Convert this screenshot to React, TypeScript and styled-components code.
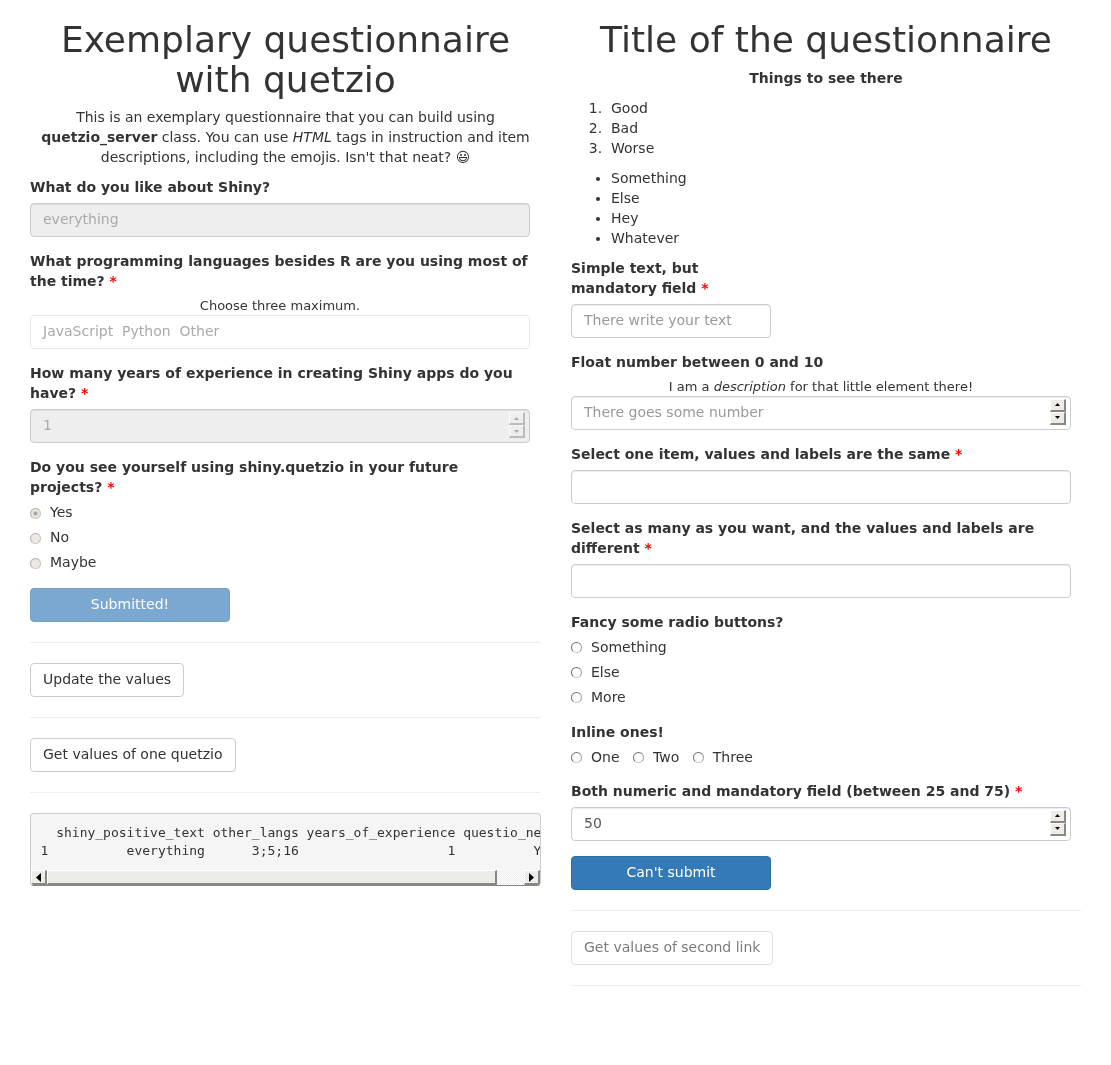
import React from "react";
import styled, { createGlobalStyle } from "styled-components";

const Global = createGlobalStyle`
  html, body { margin: 0; padding: 0; background: #fff; }
  body {
    font-family: "DejaVu Sans", sans-serif;
    font-size: 14px;
    line-height: 20px;
    color: #333;
  }
  * { box-sizing: border-box; }
`;

const Page = styled.div`
  display: grid;
  grid-template-columns: 511px 510px;
  column-gap: 30px;
  padding: 0 30px;
  align-items: start;
  height: 1065px;
  overflow: hidden;
  will-change: transform;
`;
const Column = styled.div`
  min-width: 0;
  display: flex;
  flex-direction: column;
`;
const Title = styled.h1`
  margin: 20px 0 8px;
  font-size: 36px;
  line-height: 39.6px;
  font-weight: 500;
  text-align: center;
  color: #333;
`;
const Intro = styled.p`
  margin: 0 0 10px;
  text-align: center;
`;
const OList = styled.ol`
  margin: 0 0 10px;
  padding-left: 40px;
  li::marker { content: counter(list-item) ".  "; }
`;
const UList = styled.ul`
  margin: 0 0 10px;
  padding-left: 40px;
`;
const Group = styled.div<{ $w?: number; $mb?: number }>`
  width: ${(p) => p.$w ?? 500}px;
  margin-bottom: ${(p) => p.$mb ?? 14}px;
`;
const Label = styled.label`
  display: block;
  font-weight: 700;
  margin-bottom: 6px;
`;
const Req = styled.span`
  color: red;
`;
const Desc = styled.div`
  font-size: 13px;
  line-height: 18px;
  text-align: center;
`;
const Field = styled.div<{ $disabled?: boolean; $ph?: boolean }>`
  position: relative;
  height: 34px;
  padding: 5px 12px 7px;
  border: 1px solid #ccc;
  border-radius: 4px;
  background: ${(p) => (p.$disabled ? "#eee" : "#fff")};
  box-shadow: inset 0 1px 1px rgba(0, 0, 0, 0.075);
  color: ${(p) => (p.$disabled ? "#aaa" : p.$ph ? "#999" : "#555")};
  line-height: 20px;
  white-space: pre;
`;
const SelectBox = styled.div`
  height: 34px;
  padding: 5px 12px 7px;
  border: 1px solid #e6e6e6;
  border-radius: 4px;
  background: #fff;
  color: #aaa;
  white-space: pre;
`;
const Spin = styled.div`
  position: absolute;
  right: 4px;
  top: 2px;
  width: 16px;
  display: flex;
  flex-direction: column;
`;
const SpinBtn = styled.div<{ $disabled?: boolean }>`
  width: 16px;
  height: 13px;
  display: flex;
  align-items: center;
  justify-content: center;
  background: ${(p) => (p.$disabled ? "#eee" : "#efebe7")};
  border-top: 1px solid ${(p) => (p.$disabled ? "#fafafa" : "#fff")};
  border-left: 1px solid ${(p) => (p.$disabled ? "#fafafa" : "#fff")};
  border-right: 2px solid ${(p) => (p.$disabled ? "#bbb" : "#8a8780")};
  border-bottom: 2px solid ${(p) => (p.$disabled ? "#bbb" : "#8a8780")};
  svg { display: block; }
`;
const RadioList = styled.div`
  display: flex;
  flex-direction: column;
  gap: 5px;
  margin-top: -1px;
`;
const RadioInlineList = styled.div`
  display: flex;
  gap: 13.5px;
  margin-top: -1px;
`;
const RadioRow = styled.div`
  display: flex;
  align-items: center;
  height: 20px;
`;
const Circle = styled.span<{ $disabled?: boolean; $on?: boolean }>`
  width: 11px;
  height: 11px;
  margin-top: 2px;
  margin-right: 9px;
  border-radius: 50%;
  flex: none;
  background: ${(p) =>
    p.$disabled
      ? p.$on
        ? "radial-gradient(circle, #a9a6a0 0 1.5px, #e8e5e0 2.5px)"
        : "#ece9e4"
      : "#fff"};
  border: 1.5px solid;
  border-color: ${(p) =>
    p.$disabled ? "#b0aca5 #c4c0b9 #cfccc5 #b4b0a9" : "#6e6e6e #a0a0a0 #c8c8c8 #707070"};
`;
const Btn = styled.div<{ $primary?: boolean; $disabled?: boolean; $w?: number }>`
  display: inline-block;
  width: ${(p) => (p.$w ? `${p.$w}px` : "fit-content")};
  height: 34px;
  padding: 5px 12px 7px;
  text-align: center;
  white-space: nowrap;
  border-radius: 4px;
  border: 1px solid ${(p) => (p.$primary ? "#2e6da4" : "#ccc")};
  background: ${(p) => (p.$primary ? "#337ab7" : "#fff")};
  color: ${(p) => (p.$primary ? "#fff" : "#333")};
  opacity: ${(p) => (p.$disabled ? 0.65 : 1)};
`;
const Rule = styled.hr`
  width: 100%;
  margin: 20px 0;
  border: 0;
  border-top: 1px solid #eee;
  height: 0;
`;
const PreBox = styled.div`
  border: 1px solid #ccc;
  border-bottom-color: #8a8780;
  border-radius: 4px;
  background: #f5f5f5;
  overflow: hidden;
`;
const Pre = styled.pre`
  margin: 0;
  padding: 9.5px 0 9.5px 9.5px;
  font-family: "DejaVu Sans Mono", monospace;
  font-size: 13px;
  line-height: 18.57px;
  color: #333;
  overflow: hidden;
`;
const ScrollBar = styled.div`
  height: 15px;
  display: flex;
  background: repeating-conic-gradient(#efebe7 0 25%, #fff 0 50%) 0 0 / 2px 2px;
`;
const ScrollBtn = styled.div`
  width: 16px;
  flex: none;
  display: flex;
  align-items: center;
  justify-content: center;
  background: #efebe7;
  border-top: 1px solid #fff;
  border-left: 1px solid #fff;
  border-right: 2px solid #8a8780;
  border-bottom: 2px solid #8a8780;
`;
const Thumb = styled.div`
  width: 450px;
  flex: none;
  background: #efebe7;
  border-top: 1px solid #fff;
  border-left: 1px solid #fff;
  border-right: 2px solid #8a8780;
  border-bottom: 2px solid #8a8780;
`;
const Spacer = styled.div`
  flex: 1;
`;

const Up = ({ c = "#000", s = 5 }: { c?: string; s?: number }) => (
  <svg width={s} height={3} viewBox="0 0 5 3"><path d="M2.5 0 5 3H0z" fill={c} /></svg>
);
const Down = ({ c = "#000", s = 5 }: { c?: string; s?: number }) => (
  <svg width={s} height={3} viewBox="0 0 5 3"><path d="M0 0h5L2.5 3z" fill={c} /></svg>
);
const LeftArrow = () => (
  <svg width={5} height={9} viewBox="0 0 5 9"><path d="M5 0v9L0 4.5z" fill="#000" /></svg>
);
const RightArrow = () => (
  <svg width={5} height={9} viewBox="0 0 5 9"><path d="M0 0v9l5-4.5z" fill="#000" /></svg>
);

const Spinner = ({ disabled }: { disabled?: boolean }) => (
  <Spin>
    <SpinBtn $disabled={disabled}><Up c={disabled ? "#aaa" : "#000"} /></SpinBtn>
    <SpinBtn $disabled={disabled}><Down c={disabled ? "#aaa" : "#000"} /></SpinBtn>
  </Spin>
);

const Radio = ({ label, disabled, on }: { label: string; disabled?: boolean; on?: boolean }) => (
  <RadioRow>
    <Circle $disabled={disabled} $on={on} />
    {label}
  </RadioRow>
);

const preText = `  shiny_positive_text other_langs years_of_experience questio_next_one
1          everything      3;5;16                   1          Y`;

export default function App() {
  return (
    <>
      <Global />
      <Page>
        <Column>
          <Title>Exemplary questionnaire with quetzio</Title>
          <Intro>
            This is an exemplary questionnaire that you can build using <b>quetzio_server</b> class. You can use <i>HTML</i> tags in instruction and item descriptions, including the emojis. Isn't that neat? 😃
          </Intro>
          <Group>
            <Label>What do you like about Shiny?</Label>
            <Field $disabled>everything</Field>
          </Group>
          <Group>
            <Label>What programming languages besides R are you using most of the time? <Req>*</Req></Label>
            <Desc>Choose three maximum.</Desc>
            <SelectBox>JavaScript  Python  Other</SelectBox>
          </Group>
          <Group>
            <Label>How many years of experience in creating Shiny apps do you have? <Req>*</Req></Label>
            <Field $disabled>1<Spinner disabled /></Field>
          </Group>
          <Group $mb={16}>
            <Label>Do you see yourself using shiny.quetzio in your future projects? <Req>*</Req></Label>
            <RadioList>
              <Radio label="Yes" disabled on />
              <Radio label="No" disabled />
              <Radio label="Maybe" disabled />
            </RadioList>
          </Group>
          <Btn $primary $disabled $w={200}>Submitted!</Btn>
          <Rule />
          <Btn>Update the values</Btn>
          <Rule />
          <Btn>Get values of one quetzio</Btn>
          <Rule />
          <PreBox>
            <Pre>{preText}</Pre>
            <ScrollBar>
              <ScrollBtn><LeftArrow /></ScrollBtn>
              <Thumb />
              <Spacer />
              <ScrollBtn><RightArrow /></ScrollBtn>
            </ScrollBar>
          </PreBox>
        </Column>
        <Column>
          <Title>Title of the questionnaire</Title>
          <Intro><b>Things to see there</b></Intro>
          <OList>
            <li>Good</li>
            <li>Bad</li>
            <li>Worse</li>
          </OList>
          <UList>
            <li>Something</li>
            <li>Else</li>
            <li>Hey</li>
            <li>Whatever</li>
          </UList>
          <Group $w={200}>
            <Label>Simple text, but mandatory field <Req>*</Req></Label>
            <Field $ph>There write your text</Field>
          </Group>
          <Group>
            <Label>Float number between 0 and 10</Label>
            <Desc>I am a <i>description</i> for that little element there!</Desc>
            <Field $ph>There goes some number<Spinner /></Field>
          </Group>
          <Group>
            <Label>Select one item, values and labels are the same <Req>*</Req></Label>
            <Field />
          </Group>
          <Group>
            <Label>Select as many as you want, and the values and labels are different <Req>*</Req></Label>
            <Field />
          </Group>
          <Group $mb={15}>
            <Label>Fancy some radio buttons?</Label>
            <RadioList>
              <Radio label="Something" />
              <Radio label="Else" />
              <Radio label="More" />
            </RadioList>
          </Group>
          <Group>
            <Label>Inline ones!</Label>
            <RadioInlineList>
              <Radio label="One" />
              <Radio label="Two" />
              <Radio label="Three" />
            </RadioInlineList>
          </Group>
          <Group $mb={15}>
            <Label>Both numeric and mandatory field (between 25 and 75) <Req>*</Req></Label>
            <Field>50<Spinner /></Field>
          </Group>
          <Btn $primary $w={200}>Can't submit</Btn>
          <Rule />
          <Btn $disabled>Get values of second link</Btn>
          <Rule />
        </Column>
      </Page>
    </>
  );
}
